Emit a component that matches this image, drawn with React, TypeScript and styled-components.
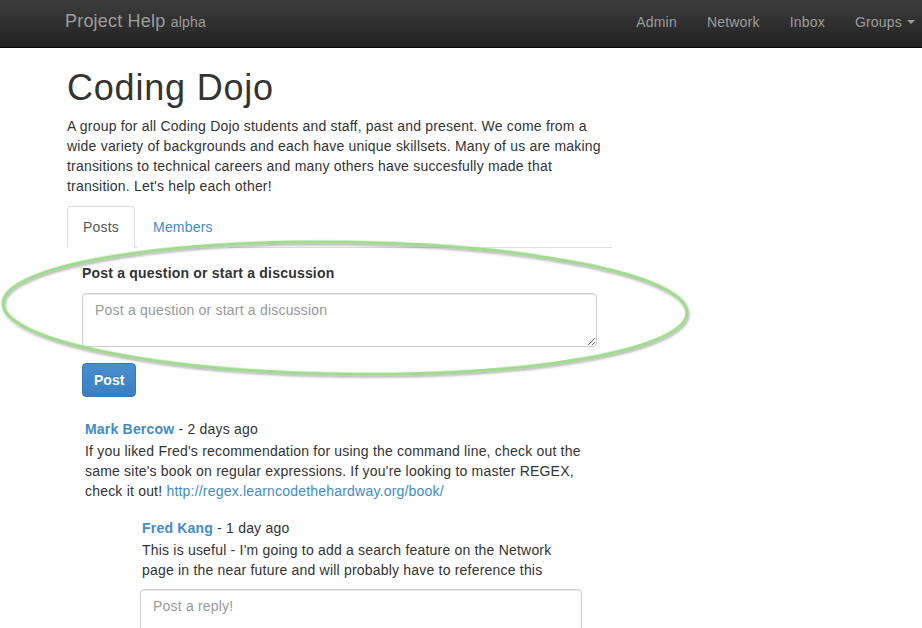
import React from "react"
import styled, { createGlobalStyle } from "styled-components"

const GlobalStyle = createGlobalStyle`
  html, body {
    margin: 0;
    padding: 0;
    overflow: hidden;
    background: #fff;
  }
  body {
    font-family: "Liberation Sans", Arial, sans-serif;
    font-size: 14px;
    line-height: 20px;
    letter-spacing: 0.2px;
    color: #333;
  }
  * {
    box-sizing: border-box;
  }
`

const Page = styled.div`
  position: relative;
  width: 922px;
  height: 628px;
  overflow: hidden;
`

const Navbar = styled.nav`
  height: 48px;
  display: flex;
  align-items: center;
  justify-content: space-between;
  padding: 0 0 4px 50px;
  background: linear-gradient(to bottom, #3c3c3c 0%, #222 100%);
  border-bottom: 1px solid #080808;
`

const Brand = styled.a`
  padding: 0 15px;
  font-size: 18px;
  line-height: 20px;
  color: #9d9d9d;
  text-decoration: none;

  small {
    font-size: 14px;
  }
`

const NavList = styled.ul`
  display: flex;
  margin: 0 -8px 0 0;
  padding: 0;
  list-style: none;
`

const NavLink = styled.a`
  display: flex;
  align-items: center;
  padding: 0 15px;
  line-height: 20px;
  color: #9d9d9d;
  text-decoration: none;
`

const Caret = styled.span`
  display: inline-block;
  width: 0;
  height: 0;
  margin-left: 5px;
  border-top: 4px solid #9d9d9d;
  border-left: 4px solid transparent;
  border-right: 4px solid transparent;
`

const Container = styled.main`
  width: 545px;
  margin-left: 67px;
`

const Title = styled.h1`
  margin: 20px 0 8px;
  font-size: 36px;
  font-weight: 500;
  line-height: 39.6px;
  letter-spacing: 0.8px;
  color: #333;
`

const Lead = styled.p`
  margin: 0 0 10px;
`

const Tabs = styled.ul`
  display: flex;
  margin: 0;
  padding: 0;
  list-style: none;
  border-bottom: 1px solid #ddd;
`

const Tab = styled.li<{ $active?: boolean }>`
  margin: 0 2px -1px 0;
  padding: 10px 15px;
  line-height: 20px;
  border: 1px solid ${(p) => (p.$active ? "#ddd" : "transparent")};
  border-bottom-color: ${(p) => (p.$active ? "#fff" : "transparent")};
  border-radius: 4px 4px 0 0;
  background: #fff;
  color: ${(p) => (p.$active ? "#555" : "#428bca")};
  cursor: pointer;
`

const Pane = styled.section`
  padding: 15px;
`

const Label = styled.label`
  display: block;
  margin-bottom: 10px;
  font-weight: bold;
`

const TextArea = styled.textarea<{ $height?: number }>`
  display: block;
  width: 100%;
  height: ${(p) => p.$height ?? 54}px;
  padding: 6px 12px;
  font-family: inherit;
  font-size: 14px;
  line-height: 20px;
  letter-spacing: 0.2px;
  color: #555;
  border: 1px solid #ccc;
  border-radius: 4px;
  box-shadow: inset 0 1px 1px rgba(0, 0, 0, 0.075);

  &::placeholder {
    color: #999;
  }
`

const Button = styled.button`
  margin-top: 16px;
  padding: 6px 11px;
  font-family: inherit;
  font-size: 14px;
  font-weight: bold;
  line-height: 20px;
  letter-spacing: 0;
  color: #fff;
  background: linear-gradient(to bottom, #4990d0 0%, #3a7ec0 100%);
  border: 1px solid #3578b8;
  border-radius: 4px;
  text-shadow: 0 -1px 0 rgba(0, 0, 0, 0.15);
`

const Comment = styled.article<{ $nested?: boolean }>`
  margin-top: ${(p) => (p.$nested ? 17 : 22)}px;
  margin-left: ${(p) => (p.$nested ? 58 : 0)}px;
`

const CommentBody = styled.div<{ $inset: number }>`
  padding-left: ${(p) => p.$inset}px;
`

const Byline = styled.div`
  margin-bottom: 2px;
`

const Author = styled.a`
  font-weight: bold;
  color: #428bca;
  text-decoration: none;
`

const Link = styled.a`
  color: #428bca;
  text-decoration: none;
`

const ReplyBox = styled.div`
  margin-top: 9px;
`

const Annotation = styled.svg`
  position: absolute;
  top: 0;
  left: 0;
  pointer-events: none;
`

const navItems = ["Admin", "Network", "Inbox"]

export default function App() {
  return (
    <Page>
      <GlobalStyle />
      <Navbar>
        <Brand href="#">
          Project Help <small>alpha</small>
        </Brand>
        <NavList>
          {navItems.map((item) => (
            <li key={item}>
              <NavLink href="#">{item}</NavLink>
            </li>
          ))}
          <li>
            <NavLink href="#">
              Groups <Caret />
            </NavLink>
          </li>
        </NavList>
      </Navbar>

      <Container>
        <Title>Coding Dojo</Title>
        <Lead>
          A group for all Coding Dojo students and staff, past and present. We come from a wide
          variety of backgrounds and each have unique skillsets. Many of us are making transitions
          to technical careers and many others have succesfully made that transition. Let's help
          each other!
        </Lead>

        <Tabs>
          <Tab $active>Posts</Tab>
          <Tab>Members</Tab>
        </Tabs>

        <Pane>
          <Label>Post a question or start a discussion</Label>
          <TextArea placeholder="Post a question or start a discussion" />
          <Button>Post</Button>

          <Comment>
            <CommentBody $inset={3}>
              <Byline>
                <Author href="#">Mark Bercow</Author> - 2 days ago
              </Byline>
              <div>
                If you liked Fred's recommendation for using the command line, check out the same
                site's book on regular expressions. If you're looking to master REGEX, check it out!{" "}
                <Link href="#">http://regex.learncodethehardway.org/book/</Link>
              </div>
            </CommentBody>

            <Comment $nested>
              <CommentBody $inset={2} style={{ width: 442 }}>
                <Byline>
                  <Author href="#">Fred Kang</Author> - 1 day ago
                </Byline>
                <div>
                  This is useful - I'm going to add a search feature on the Network page in the
                  near future and will probably have to reference this
                </div>
              </CommentBody>
              <ReplyBox style={{ width: 442 }}>
                <TextArea $height={60} placeholder="Post a reply!" />
              </ReplyBox>
            </Comment>
          </Comment>
        </Pane>
      </Container>

      <Annotation width="922" height="628" viewBox="0 0 922 628">
        <defs>
          <filter id="shade" x="-10%" y="-30%" width="120%" height="160%">
            <feDropShadow dx="1" dy="2" stdDeviation="1" floodColor="#555" floodOpacity="0.45" />
          </filter>
        </defs>
        <ellipse
          cx="345"
          cy="308"
          rx="342"
          ry="66"
          transform="rotate(0.8 345 308)"
          fill="none"
          stroke="#9edc8b"
          strokeWidth="3"
          filter="url(#shade)"
        />
      </Annotation>
    </Page>
  )
}
